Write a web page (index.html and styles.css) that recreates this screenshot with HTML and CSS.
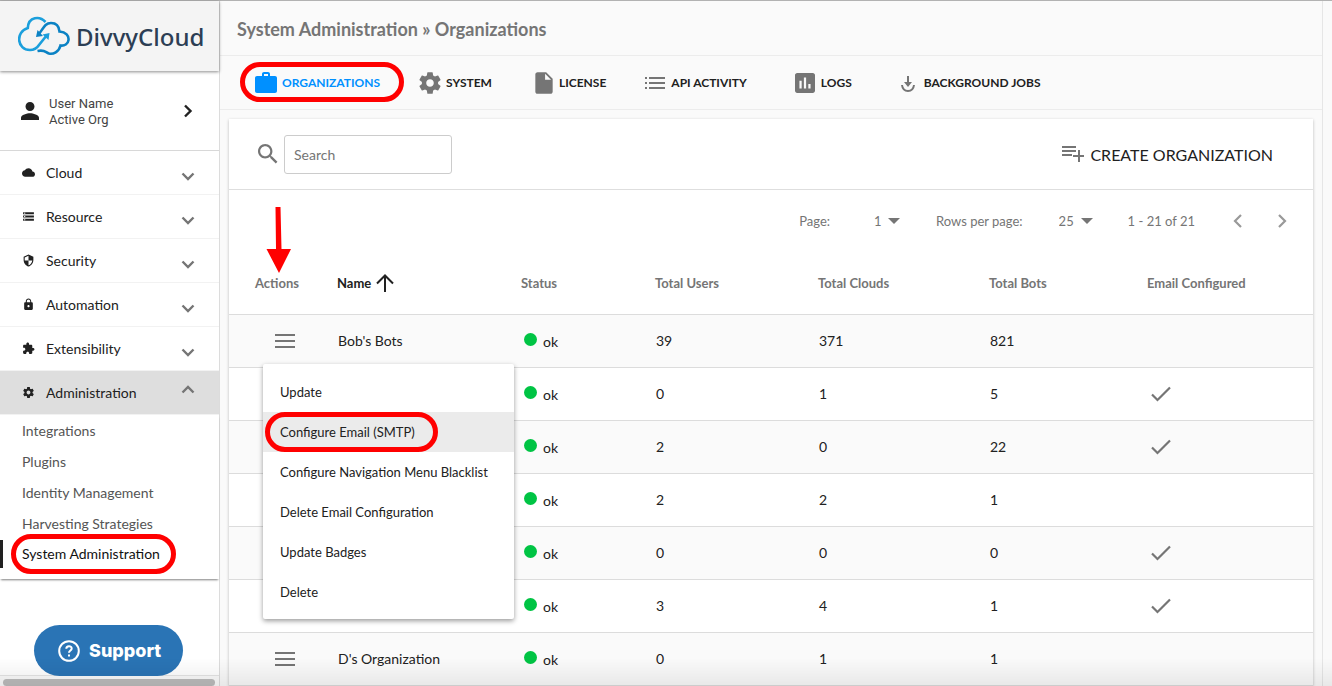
FILE: index.html
```html
<!DOCTYPE html>
<html lang="en">
<head>
<meta charset="utf-8">
<meta name="viewport" content="width=device-width, initial-scale=1">
<title>System Administration » Organizations</title>
<link rel="stylesheet" href="styles.css">
</head>
<body>
<svg class="defs" aria-hidden="true">
  <symbol id="gear" viewBox="0 0 24 24"><path d="M19.43 12.98c.04-.32.07-.64.07-.98s-.03-.66-.07-.98l2.11-1.65c.19-.15.24-.42.12-.64l-2-3.46c-.12-.22-.39-.3-.61-.22l-2.49 1c-.52-.4-1.08-.73-1.69-.98l-.38-2.65C14.46 2.18 14.25 2 14 2h-4c-.25 0-.46.18-.49.42l-.38 2.65c-.61.25-1.17.59-1.69.98l-2.49-1c-.23-.09-.49 0-.61.22l-2 3.46c-.13.22-.07.49.12.64l2.11 1.65c-.04.32-.07.65-.07.98s.03.66.07.98l-2.11 1.65c-.19.15-.24.42-.12.64l2 3.46c.12.22.39.3.61.22l2.49-1c.52.4 1.08.73 1.69.98l.38 2.65c.03.24.24.42.49.42h4c.25 0 .46-.18.49-.42l.38-2.65c.61-.25 1.17-.59 1.69-.98l2.49 1c.23.09.49 0 .61-.22l2-3.46c.12-.22.07-.49-.12-.64l-2.11-1.65zM12 15.5c-1.93 0-3.5-1.57-3.5-3.5s1.57-3.5 3.5-3.5 3.5 1.57 3.5 3.5-1.57 3.5-3.5 3.5z"/></symbol>
  <symbol id="down" viewBox="0 0 14 14"><path d="M1.500 4.500 7 10l5.500-5.500" fill="none" stroke="currentColor" stroke-width="2.400"/></symbol>
  <symbol id="burger" viewBox="0 0 20 16"><path d="M0 1h20v2H0zM0 7h20v2H0zM0 13h20v2H0z"/></symbol>
  <symbol id="check" viewBox="0 0 20 16"><path d="M1 8.500 6.500 14 19 1.500" fill="none" stroke="currentColor" stroke-width="2.200"/></symbol>
</svg>
<div class="app">
  <aside class="sidebar">
    <a class="logo" href="#">
      <svg class="logo-mark" viewBox="0 0 52 40" aria-hidden="true">
        <g fill="none" stroke-width="2.600">
          <path stroke="#1b9fdc" d="M27.500 6C22 0 10.500 0 9.800 12-3 16-1 34 12 34c5 0 7-2 9-5L29 19"/>
          <path stroke="#0b82c4" d="M20 19C25 14 26 7 33 7c5 0 8 3 8.500 8.500C48 16 51 20 50.500 24c-.5 4-4 6-8 5.500C41 36 35 38.500 31 37.500 27 36 27 33.500 19.500 35"/>
        </g>
        <path fill="#1b9fdc" d="M24.500 18.500 31.500 17l-1 7z"/>
        <path fill="#0b82c4" d="M18 21l1.500-7 5.500 6z"/>
      </svg>
      <span>DivvyCloud</span>
    </a>
    <button class="user" type="button">
      <svg class="person" viewBox="4 4 16 16" aria-hidden="true"><path d="M12 12c2.210 0 4-1.790 4-4s-1.790-4-4-4-4 1.790-4 4 1.790 4 4 4zm0 2c-2.670 0-8 1.340-8 4v2h16v-2c0-2.660-5.330-4-8-4z"/></svg>
      <span class="user-text">User Name<br>Active Org</span>
      <svg class="chev" viewBox="0 0 14 14" aria-hidden="true"><path d="M4 1.500 9.500 7 4 12.500" fill="none" stroke="currentColor" stroke-width="2.400"/></svg>
    </button>
    <nav class="nav">
      <button type="button"><svg class="ni" viewBox="0 0 24 24"><path d="M19.350 10.040C18.670 6.590 15.640 4 12 4 9.110 4 6.600 5.640 5.350 8.040 2.340 8.360 0 10.910 0 14c0 3.310 2.690 6 6 6h13c2.760 0 5-2.240 5-5 0-2.640-2.050-4.780-4.650-4.960z"/></svg><span>Cloud</span><svg class="chev"><use href="#down"/></svg></button>
      <button type="button"><svg class="ni" viewBox="0 0 24 24"><path d="M2 20h20v-4H2v4zm2-3h2v2H4v-2zM2 4v4h20V4H2zm4 3H4V5h2v2zm-4 7h20v-4H2v4zm2-3h2v2H4v-2z"/></svg><span>Resource</span><svg class="chev"><use href="#down"/></svg></button>
      <button type="button"><svg class="ni" viewBox="0 0 24 24"><path d="M12 1L3 5v6c0 5.550 3.840 10.740 9 12 5.160-1.260 9-6.450 9-12V5l-9-4zm0 10.990h7c-.53 4.120-3.280 7.790-7 8.940V12H5V6.300l7-3.110v8.800z"/></svg><span>Security</span><svg class="chev"><use href="#down"/></svg></button>
      <button type="button"><svg class="ni" viewBox="0 0 24 24"><path d="M18 8h-1V6c0-2.760-2.240-5-5-5S7 3.240 7 6v2H6c-1.100 0-2 .9-2 2v10c0 1.100.9 2 2 2h12c1.100 0 2-.9 2-2V10c0-1.100-.9-2-2-2zm-6 9c-1.100 0-2-.9-2-2s.9-2 2-2 2 .9 2 2-.9 2-2 2zm3.100-9H8.900V6c0-1.710 1.390-3.100 3.100-3.100 1.710 0 3.100 1.390 3.100 3.100v2z"/></svg><span>Automation</span><svg class="chev"><use href="#down"/></svg></button>
      <button type="button"><svg class="ni" viewBox="0 0 24 24"><path d="M20.500 11H19V7c0-1.100-.9-2-2-2h-4V3.500C13 2.120 11.880 1 10.500 1S8 2.120 8 3.500V5H4c-1.100 0-1.990.9-1.990 2v3.800H3.500c1.490 0 2.700 1.210 2.700 2.700s-1.210 2.700-2.700 2.700H2V20c0 1.100.9 2 2 2h3.800v-1.500c0-1.490 1.210-2.700 2.700-2.700 1.490 0 2.700 1.210 2.700 2.700V22H17c1.100 0 2-.9 2-2v-4h1.500c1.380 0 2.500-1.120 2.500-2.500S21.880 11 20.500 11z"/></svg><span>Extensibility</span><svg class="chev"><use href="#down"/></svg></button>
      <button type="button" class="open" aria-expanded="true"><svg class="ni"><use href="#gear"/></svg><span>Administration</span><svg class="chev" viewBox="0 0 14 14"><path d="M1.500 9.500 7 4l5.500 5.500" fill="none" stroke="currentColor" stroke-width="2.400"/></svg></button>
    </nav>
    <div class="subnav">
      <a href="#">Integrations</a>
      <a href="#">Plugins</a>
      <a href="#">Identity Management</a>
      <a href="#">Harvesting Strategies</a>
      <a href="#" class="current" aria-current="page"><span class="marked">System Administration<i class="ring ring-nav"></i></span></a>
    </div>
    <div class="hscroll"><div class="thumb"></div></div>
    <button class="support" type="button"><svg viewBox="0 0 22 22" aria-hidden="true"><g fill="none" stroke="#fff" stroke-width="2"><circle cx="11" cy="11" r="9.800"/><path d="M8.300 8.800c0-3.400 5.400-3.400 5.400-.3 0 1.900-2.700 2-2.700 4.200M11 14.500v2"/></g></svg><span>Support</span></button>
  </aside>
  <main class="main">
    <h1>System Administration » Organizations</h1>
    <nav class="tabs">
      <a href="#" class="tab t1 active"><svg class="i24" viewBox="0 0 24 24"><path d="M10 1h4c1.100 0 2 .9 2 2v2h5c1.100 0 2 .9 2 2v13c0 1.100-.9 2-2 2H3c-1.100 0-2-.9-2-2V7c0-1.100.9-2 2-2h5V3c0-1.100.9-2 2-2zm0 4h4V3h-4z"/></svg>ORGANIZATIONS<i class="ring ring-tab"></i></a>
      <a href="#" class="tab t2"><svg class="i26"><use href="#gear"/></svg>SYSTEM</a>
      <a href="#" class="tab t3"><svg class="i26" viewBox="0 0 24 24"><path d="M6 2c-1.100 0-1.990.9-1.990 2L4 20c0 1.100.89 2 1.990 2H18c1.100 0 2-.9 2-2V8l-6-6H6zm7 7V3.500L18.500 9H13z"/></svg>LICENSE</a>
      <a href="#" class="tab t4"><svg class="i20" viewBox="0 0 20 20"><path d="M0 4h2v2H0zM4 4h16v2H4zM0 9h2v2H0zM4 9h16v2H4zM0 14h2v2H0zM4 14h16v2H4z"/></svg>API ACTIVITY</a>
      <a href="#" class="tab t5"><svg class="i20" viewBox="3 3 18 18"><path d="M19 3H5c-1.100 0-2 .9-2 2v14c0 1.100.9 2 2 2h14c1.100 0 2-.9 2-2V5c0-1.100-.9-2-2-2zM9 17H7v-7h2v7zm4 0h-2V7h2v10zm4 0h-2v-4h2v4z"/></svg>LOGS</a>
      <a href="#" class="tab t6"><svg class="i20" viewBox="0 0 20 20"><path d="M9 3h2v6h3l-4 5-4-5h3z"/><path d="M4 12c1 8 11 8 12 0" fill="none" stroke="currentColor" stroke-width="2"/></svg>BACKGROUND JOBS</a>
    </nav>
    <section class="card">
      <div class="toolbar">
        <label for="q" aria-label="Search"><svg class="mag" viewBox="3 3 18 18"><path d="M15.500 14h-.79l-.28-.27C15.410 12.590 16 11.110 16 9.500 16 5.910 13.090 3 9.500 3S3 5.910 3 9.500 5.910 16 9.500 16c1.610 0 3.090-.59 4.230-1.570l.27.28v.79l5 4.990L20.490 19l-4.990-5zm-6 0C7.010 14 5 11.990 5 9.500S7.010 5 9.500 5 14 7.010 14 9.500 11.990 14 9.500 14z"/></svg></label>
        <input id="q" type="text" placeholder="Search">
        <button class="create" type="button"><svg viewBox="0 0 22 16"><path d="M0 0h14v2H0zM0 4h14v2H0zM0 8h10v2H0zM16 4h2v5h4v2h-4v5h-2v-5h-5V9h5z"/></svg>CREATE ORGANIZATION</button>
      </div>
      <div class="pager">
        <label for="page">Page:</label>
        <span class="pick"><select id="page"><option>1</option></select><svg viewBox="0 0 12 6"><path d="M0 0h12L6 6z"/></svg></span>
        <label for="rows" class="rows-label">Rows per page:</label>
        <span class="pick"><select id="rows"><option>25</option></select><svg viewBox="0 0 12 6"><path d="M0 0h12L6 6z"/></svg></span>
        <span class="range">1 - 21 of 21</span>
        <button type="button" aria-label="Previous page"><svg viewBox="0 0 16 16"><path d="M11 2 5 8l6 6" fill="none" stroke="currentColor" stroke-width="2.200"/></svg></button>
        <button type="button" aria-label="Next page"><svg viewBox="0 0 16 16"><path d="M5 2l6 6-6 6" fill="none" stroke="currentColor" stroke-width="2.200"/></svg></button>
      </div>
      <table>
        <colgroup><col class="c1"><col class="c2"><col class="c3"><col class="c4"><col class="c5"><col class="c6"><col class="c7"></colgroup>
        <thead><tr>
          <th><span class="marked">Actions<svg class="arrow" viewBox="0 0 26 68" aria-hidden="true"><path d="M9.500 1h5l1 42H25L13 67 .5 43h9.500z" fill="#f00"/></svg></span></th>
          <th class="sorted"><span class="sort">Name<svg viewBox="0 0 18 18"><path d="M9 18V2M1 9.500 9 1.500l8 8" fill="none" stroke="currentColor" stroke-width="2"/></svg></span></th>
          <th>Status</th><th>Total Users</th><th>Total Clouds</th><th>Total Bots</th><th>Email Configured</th>
        </tr></thead>
        <tbody>
          <tr><td class="act"><span class="anchor"><button class="burger" type="button" aria-label="Actions"><svg><use href="#burger"/></svg></button>
            <span class="menu" role="menu">
              <button type="button" role="menuitem">Update</button>
              <button type="button" role="menuitem" class="hover"><span class="marked">Configure Email (SMTP)<i class="ring ring-menu"></i></span></button>
              <button type="button" role="menuitem">Configure Navigation Menu Blacklist</button>
              <button type="button" role="menuitem">Delete Email Configuration</button>
              <button type="button" role="menuitem">Update Badges</button>
              <button type="button" role="menuitem">Delete</button>
            </span></span></td><td>Bob's Bots</td><td><span class="ok">ok</span></td><td>39</td><td>371</td><td>821</td><td></td></tr>
          <tr><td></td><td></td><td><span class="ok">ok</span></td><td>0</td><td>1</td><td>5</td><td><svg class="check"><use href="#check"/></svg></td></tr>
          <tr><td></td><td></td><td><span class="ok">ok</span></td><td>2</td><td>0</td><td>22</td><td><svg class="check"><use href="#check"/></svg></td></tr>
          <tr><td></td><td></td><td><span class="ok">ok</span></td><td>2</td><td>2</td><td>1</td><td></td></tr>
          <tr><td></td><td></td><td><span class="ok">ok</span></td><td>0</td><td>0</td><td>0</td><td><svg class="check"><use href="#check"/></svg></td></tr>
          <tr><td></td><td></td><td><span class="ok">ok</span></td><td>3</td><td>4</td><td>1</td><td><svg class="check"><use href="#check"/></svg></td></tr>
          <tr><td class="act"><button class="burger" type="button" aria-label="Actions"><svg><use href="#burger"/></svg></button></td><td>D's Organization</td><td><span class="ok">ok</span></td><td>0</td><td>1</td><td>1</td><td></td></tr>
        </tbody>
      </table>
    </section>
  </main>
</div>
<div class="fade"></div>
</body>
</html>
```
FILE: styles.css
```css
* { box-sizing: border-box; }
body { margin: 0; font-family: Lato, sans-serif; font-size: 14px; color: #212121; background: #fafafa; }
button, input, select { font: inherit; color: inherit; }
button { border: 0; background: none; padding: 0; cursor: pointer; text-align: left; }
a { color: inherit; text-decoration: none; }
svg { display: block; flex: none; fill: currentColor; }
.defs { position: absolute; width: 0; height: 0; }
.app { display: flex; min-height: 100vh; border-top: 1px solid #b2b2b2; }

.sidebar { display: flex; flex-direction: column; width: 220px; flex: none; background: #fff; border-right: 1px solid #dcdcdc; position: relative; }
.logo { display: flex; align-items: center; gap: 6px; height: 70px; padding-left: 18px; background: #f4f4f4; box-shadow: 0 1px 3px rgba(0,0,0,.45); font: 500 24px "Noto Sans", sans-serif; color: #2c3e54; z-index: 1; }
.logo-mark { width: 52px; height: 40px; }
.user { display: flex; align-items: center; height: 80px; padding: 1px 24px 0 21px; gap: 10px; border-bottom: 1px solid #d8d8d8; }
.person { width: 18px; height: 18px; }
.user-text { flex: 1; padding-top: 2px; font: 13px/16px Roboto, sans-serif; color: #444; }
.chev { width: 14px; height: 14px; }
.nav { display: flex; flex-direction: column; }
.nav button { display: flex; align-items: center; height: 44px; padding: 0 24px 0 22px; border-bottom: 1px solid #f2f2f2; }
.nav button span { flex: 1; padding-left: 11px; }
.nav .chev { color: #757575; margin-top: 7px; }
.nav .open .chev { margin: 0 0 6px; }
.ni { width: 13px; height: 13px; }
.nav .open { background: #dedede; }
.subnav { display: flex; flex-direction: column; padding-bottom: 11px; color: #555; box-shadow: 0 2px 2px -1px rgba(0,0,0,.5); }
.subnav a { height: 31px; line-height: 31px; padding-left: 22px; }
.subnav .current { height: 28px; line-height: 28px; margin-top: 1px; border-left: 3px solid #212121; padding-left: 19px; color: #111; }
.marked { position: relative; display: inline-block; }
.ring { position: absolute; border: 5px solid #f00; border-radius: 20px; height: 40px; pointer-events: none; }
.ring-nav { left: -11px; right: -16px; top: -6px; }
.hscroll { margin-top: auto; height: 11px; padding: 3px 4px 0 3px; border-top: 1px solid #e4e4e4; background: #fafafa; }
.thumb { height: 7px; border-radius: 4px; background: #bcbcbc; }
.support { position: absolute; left: 34px; bottom: 10px; display: flex; align-items: center; gap: 9px; width: 149px; height: 51px; padding-left: 24px; border-radius: 26px; background: #2a74b5; color: #fff; font: 800 18px Inter, sans-serif; }
.support svg { width: 22px; height: 22px; }

.main { flex: 1; min-width: 0; border-right: 1px solid #e6e6e6; margin-right: 9px; }
h1 { margin: 0; padding-left: 17px; height: 55px; line-height: 57px; font-size: 18px; font-weight: 700; color: #757575; border-bottom: 1px solid #ececec; }
.tabs { display: flex; align-items: center; height: 54px; border-bottom: 1px solid #ececec; padding-left: 34px; font-size: 12px; font-weight: 700; }
.tab { position: relative; display: flex; align-items: center; gap: 4px; white-space: nowrap; }
.tab svg { color: #757575; }
.active, .tab.active svg { color: #0090ff; }
.i24 { width: 24px; height: 24px; }
.i26 { width: 26px; height: 26px; }
.i20 { width: 20px; height: 20px; }
.t2 { margin-left: 37px; gap: 3px; }
.t3 { margin-left: 39px; gap: 2px; }
.t4 { margin-left: 39px; gap: 6px; }
.t5 { margin-left: 48px; gap: 6px; }
.t6 { margin-left: 46px; gap: 6px; }
.ring-tab { left: -14px; right: -24px; top: -9px; }

.card { margin: 9px 9px 0; background: #fff; box-shadow: 0 1px 3px rgba(0,0,0,.25); }
.toolbar { display: flex; align-items: center; height: 71px; border-bottom: 1px solid #dedede; padding: 0 40px 0 29px; }
.mag { width: 20px; height: 20px; color: #757575; }
.toolbar input { width: 168px; height: 39px; margin-left: 6px; padding: 0 9px; border: 1px solid #ccc; border-radius: 3px; background: #fff; }
.toolbar input::placeholder { color: #757575; opacity: 1; }
.create { display: flex; align-items: center; gap: 6px; margin-left: auto; font-size: 16px; }
.create svg { width: 22px; height: 16px; color: #757575; }
.pager { display: flex; align-items: center; justify-content: flex-end; height: 62px; padding-right: 23px; font-size: 13px; color: #757575; }
.pick { display: flex; align-items: center; gap: 6px; width: 70px; justify-content: flex-end; }
.pick select { appearance: none; border: 0; background: none; padding: 0; }
.pick svg { width: 12px; height: 6px; }
.rows-label { margin-left: 36px; }
.range { margin: 0 35px; }
.pager button { color: #999; }
.pager button + button { margin-left: 28px; }
.pager button svg { width: 16px; height: 16px; }

table { width: 100%; table-layout: fixed; border-collapse: collapse; }
.c1 { width: 82px; } .c2 { width: 184px; } .c3 { width: 134px; } .c4 { width: 163px; } .c5 { width: 171px; } .c6 { width: 158px; } .c7 { width: 192px; }
th { height: 62px; padding: 0 0 0 26px; text-align: left; font-size: 13px; font-weight: 700; color: #757575; border-bottom: 1px solid #dcdcdc; white-space: nowrap; }
.sorted { color: #212121; }
.sort { display: flex; align-items: center; gap: 5px; }
.sort svg { width: 18px; height: 18px; }
.arrow { position: absolute; left: 11px; bottom: 17px; width: 26px; height: 68px; }
td { height: 53px; padding: 0 0 0 27px; border-bottom: 1px solid #dcdcdc; white-space: nowrap; }
tbody tr:nth-child(odd) { background: #fafafa; }
.act { padding-left: 46px; color: #757575; }
.burger { display: block; }
.burger svg { width: 20px; height: 16px; }
.anchor { position: relative; display: block; }
.ok { display: flex; align-items: center; gap: 6px; padding: 2px 0 0 2px; }
.ok::before { content: ""; width: 13px; height: 13px; border-radius: 50%; background: #00c444; margin-bottom: 4px; }
.check { width: 20px; height: 16px; margin-left: 3px; color: #757575; }
.menu { position: absolute; z-index: 2; left: -12px; top: 31px; display: flex; flex-direction: column; width: 251px; padding: 8px 0 7px; background: #fff; color: #212121; border-radius: 2px; box-shadow: 0 2px 5px rgba(0,0,0,.4); font-size: 13px; }
.menu > button { height: 40px; padding-left: 17px; }
.menu .hover { background: #ebebeb; }
.ring-menu { left: -15px; right: -23px; top: -12px; }
.fade { position: fixed; left: 0; right: 0; bottom: 0; height: 28px; background: linear-gradient(transparent, rgba(0,0,0,.07)); pointer-events: none; }
```
